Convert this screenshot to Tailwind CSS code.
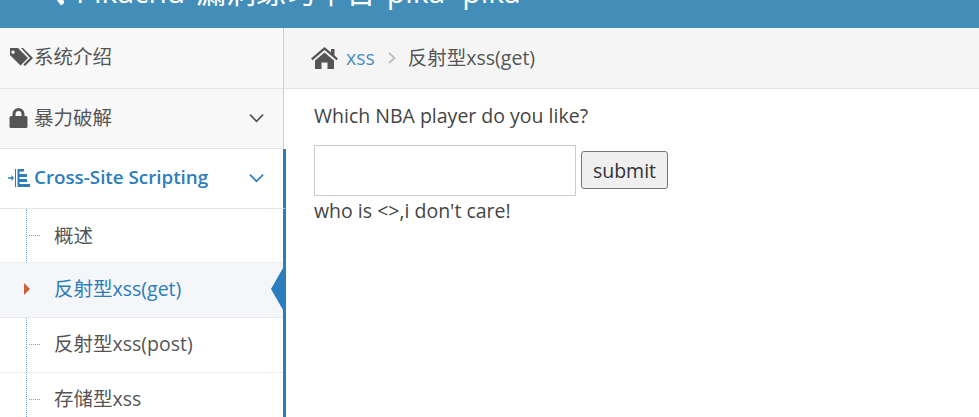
<!DOCTYPE html>
<html lang="en">
<head>
    <meta charset="UTF-8">
    <title>Pikachu</title>
    <script src="https://cdn.jsdelivr.net/npm/@tailwindcss/browser@4"></script>
</head>
<body class="h-[417px] w-[979px] overflow-hidden bg-white font-['Open_Sans','Noto_Sans_CJK_SC',sans-serif] text-[19.5px] text-[#555]">
    <!-- top bar, scrolled so the title is cut off -->
    <header class="h-[28px] overflow-hidden bg-[#438eb9] pl-[50px] text-white">
        <div class="-mt-[28px] flex h-[40px] items-center gap-[12px] whitespace-nowrap text-[30px] leading-[40px] [word-spacing:3px]">
            <svg class="h-[30px] w-[14px] shrink-0" viewBox="0 0 14 30"><path d="M13 3 L4 15 L13 27" fill="none" stroke="white" stroke-width="5"/></svg>
            <span>Pikachu 漏洞练习平台 pika~pika~</span>
        </div>
    </header>

    <div class="flex h-[389px]">
        <!-- sidebar -->
        <aside class="relative z-10 w-[284px] shrink-0">
            <div class="flex h-[61px] items-center border-r border-b border-r-[#ccc] border-b-[#e5e5e5] bg-[#f8f8f8] pb-[2px] pl-[9px] pr-[19px]">
                <svg class="h-[20px] w-[25px] shrink-0" viewBox="0 0 25 20" fill="#555"><path d="M1 1h8l10 10-7.500 7.500L1 8z M4 3.500a1.700 1.700 0 1 0 .01 0z" fill-rule="evenodd"/><path d="M12 1h2l10 10-8 8-1.600-1.600L21 11z"/></svg>
                <span>系统介绍</span>
            </div>
            <div class="flex h-[60px] items-center border-r border-b border-r-[#ccc] border-b-[#e5e5e5] bg-[#f8f8f8] pb-[2px] pl-[9px] pr-[19px]">
                <svg class="mr-[6px] h-[20px] w-[19px] shrink-0" viewBox="0 0 18 20" fill="#555"><path d="M3 8V6a6 6 0 0 1 12 0v2h1.500A1.500 1.500 0 0 1 18 9.500v9a1.500 1.500 0 0 1-1.500 1.500h-15A1.500 1.500 0 0 1 0 18.500v-9A1.500 1.500 0 0 1 1.500 8z M6 8h6V6a3 3 0 0 0-6 0z" fill-rule="evenodd"/></svg>
                <span>暴力破解</span>
                <svg class="ml-auto h-[10px] w-[15px]" viewBox="0 0 16 10"><path d="M1 1.500 8 8.500 15 1.500" fill="none" stroke="#555" stroke-width="1.800"/></svg>
            </div>
            <div class="flex h-[60px] w-[286px] items-center border-r-[3px] border-b border-r-[#2b7dbc] border-b-[#e5e5e5] bg-white pb-[2px] pl-[8px] pr-[19px] text-[#2b7dbc]">
                <svg class="mr-[4px] h-[18px] w-[22px] shrink-0" viewBox="0 0 22 18" fill="#2b7dbc"><path d="M0 8.200h3.500V6L6 9l-2.500 3V9.800H0z M7 0h1v18H7z M9.500 0h2v18h-2z M11.500 0h4.500v2.500h-4.500z M11.500 5h7.500v3h-7.500z M11.500 10h7.500v3h-7.500z M11.500 15h10.500v3H11.500z"/></svg>
                <span class="text-[18.8px] font-semibold">Cross-Site Scripting</span>
                <svg class="ml-auto h-[10px] w-[15px]" viewBox="0 0 16 10"><path d="M1 1.500 8 8.500 15 1.500" fill="none" stroke="#2b7dbc" stroke-width="1.800"/></svg>
            </div>
            <ul class="relative w-[286px] border-r-[3px] border-r-[#2b7dbc] bg-white">
                <li class="absolute top-0 bottom-0 left-[26px] border-l border-dotted border-l-[#6fa8d6]"></li>
                <li class="flex h-[54px] items-center border-b border-dotted border-b-[#ddd] pl-[54px]">
                    <span class="absolute left-[29px] w-[11px] border-t border-dotted border-t-[#6fa8d6]"></span>
                    概述
                </li>
                <li class="relative flex h-[55px] items-center border-b border-dotted border-b-[#ddd] bg-[#f4f6f9] pb-[2px] pl-[54px] text-[#2b7dbc]">
                    <span class="absolute left-[24px] h-0 w-0 border-y-[6px] border-l-[6px] border-y-transparent border-l-[#c86139]"></span>
                    反射型xss(get)
                    <span class="absolute right-0 h-0 w-0 border-y-[21px] border-r-[12px] border-y-transparent border-r-[#2b7dbc]"></span>
                </li>
                <li class="flex h-[55px] items-center border-b border-dotted border-b-[#ddd] pb-[2px] pl-[54px]">
                    <span class="absolute left-[29px] w-[11px] border-t border-dotted border-t-[#6fa8d6]"></span>
                    反射型xss(post)
                </li>
                <li class="flex h-[54px] items-center pb-[2px] pl-[54px]">
                    <span class="absolute left-[29px] w-[11px] border-t border-dotted border-t-[#6fa8d6]"></span>
                    存储型xss
                </li>
            </ul>
        </aside>

        <!-- main -->
        <main class="min-w-0 flex-1">
            <div class="flex h-[61px] items-center border-b border-b-[#e5e5e5] bg-[#f5f5f5] pl-[27px]">
                <svg class="mr-[8px] h-[22px] w-[27px] shrink-0" viewBox="0 0 27 22" fill="#555"><path d="M13.500 0 20 5.500V2h3.500v6.500L27 11.500l-1.500 1.700L13.500 3 1.500 13.200 0 11.500z M4 13.500 13.500 5.500 23 13.500V22h-6.500v-6.500h-6V22H4z"/></svg>
                <a class="text-[#4c8fbd]">xss</a>
                <svg class="ml-[13px] mr-[12px] h-[12px] w-[8px]" viewBox="0 0 8 12"><path d="M1 1 6.500 6 1 11" fill="none" stroke="#bbb" stroke-width="1.700"/></svg>
                <span>反射型xss(get)</span>
            </div>
            <div class="pl-[30px] pt-[13px] leading-[27px] text-[#444]">
                <p>Which NBA player do you like?</p>
                <form class="mt-[16px] flex items-end gap-[5px]">
                    <input type="text" class="h-[51px] w-[262px] border border-[#ccc] bg-white">
                    <button type="button" class="mb-[7px] h-[38px] w-[87px] rounded-[3px] border border-[#767676] bg-[#efefef] text-center text-[#333]">submit</button>
                </form>
                <p class="mt-[1px]">who is &lt;&gt;,i don't care!</p>
            </div>
        </main>
    </div>
</body>
</html>
